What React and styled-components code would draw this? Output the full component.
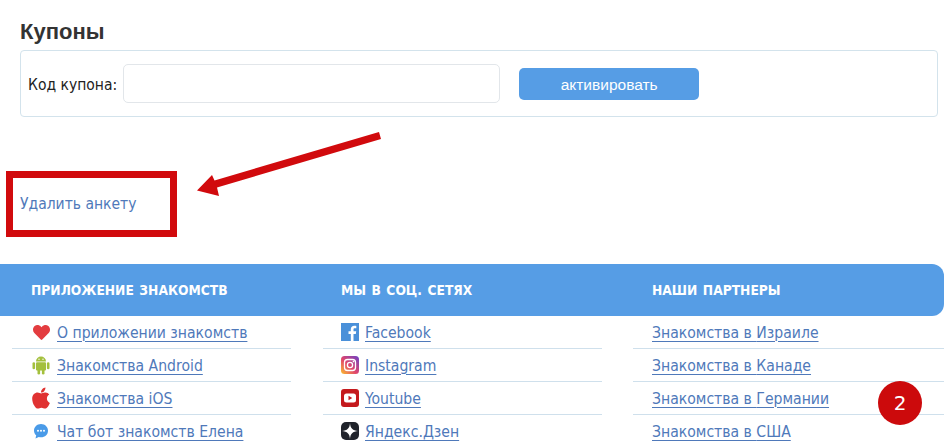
import React from 'react';
import styled, { createGlobalStyle } from 'styled-components';
import { FaApple, FaHeart } from 'react-icons/fa';

const GlobalStyle = createGlobalStyle`
  html, body {
    margin: 0;
    background: #fff;
  }
  body {
    font-family: 'DejaVu Sans', sans-serif;
  }
`;

const Page = styled.div`
  position: relative;
  width: 952px;
  height: 444px;
  overflow: hidden;
`;

const Coupons = styled.section`
  padding: 20px 14px 0 20px;
`;

const Heading = styled.h2`
  margin: 0 0 6px;
  font: bold 22px/24px 'Liberation Sans', sans-serif;
  color: #333;
`;

const CouponBox = styled.form`
  display: flex;
  align-items: center;
  height: 65px;
  padding: 0 7px;
  border: 1px solid #d3e3ec;
  border-radius: 4px;
`;

const Label = styled.label`
  margin: 2px 6px 0 0;
  font-size: 15.5px;
  color: #222;
  font-stretch: condensed;
`;

const CodeInput = styled.input`
  box-sizing: border-box;
  width: 377px;
  height: 39px;
  margin-right: 19px;
  border: 1px solid #e2e6ea;
  border-radius: 5px;
`;

const Activate = styled.button`
  width: 180px;
  height: 32px;
  padding: 2px 0 0;
  border: 0;
  border-radius: 5px;
  background: #569de5;
  color: #fff;
  font: 15.5px 'Liberation Sans', sans-serif;
`;

const DeleteRow = styled.div`
  margin: 77px 0 0 20px;
  height: 20px;
`;

const DeleteLink = styled.a`
  font-size: 15.5px;
  line-height: 20px;
  color: #4f79ba;
  font-stretch: condensed;
`;

const Frame = styled.div`
  position: absolute;
  left: 6px;
  top: 171px;
  width: 171px;
  height: 66px;
  box-sizing: border-box;
  border: 7px solid #d10a0d;
`;

const Arrow = styled.svg`
  position: absolute;
  left: 190px;
  top: 125px;
`;

const Columns = styled.div`
  display: grid;
  grid-template-columns: 311px 311px 322px;
  margin-top: 50px;
  width: 944px;
`;

const Title = styled.h3`
  margin: 0;
  height: 52px;
  padding-left: ${p => (p.$first ? '31px' : '30px')};
  background: #569de5;
  border-radius: ${p => (p.$last ? '0 12px 12px 0' : '0')};
  color: #fff;
  font-size: 13.7px;
  font-weight: bold;
  font-stretch: condensed;
  word-spacing: 1.2px;
  line-height: 52px;
`;

const List = styled.ul`
  list-style: none;
  margin: 0;
  padding: 0 ${p => (p.$last ? '0' : '20px')} 0 ${p => (p.$last ? '11px' : '12px')};
`;

const Item = styled.li`
  display: flex;
  align-items: center;
  height: 32px;
  padding-left: ${p => (p.$plain ? '19px' : '18px')};
  border-bottom: 1px solid #cfe0ec;
`;

const Glyph = styled.span`
  display: flex;
  justify-content: center;
  width: 18px;
  margin: 0 7px 0 2px;
  color: ${p => p.$color};
  font-size: ${p => p.$size || 18}px;
`;

const Square = styled.svg`
  display: block;
  width: 18px;
  height: 18px;
  margin-right: 6px;
`;

const Link = styled.a`
  font-size: 15.6px;
  line-height: 20px;
  padding-top: 1px;
  color: #4f79ba;
  text-decoration: underline;
  text-underline-offset: 3px;
  text-decoration-thickness: 1px;
  font-stretch: condensed;
`;

const Badge = styled.div`
  position: absolute;
  left: 878px;
  top: 381px;
  width: 44px;
  height: 44px;
  border-radius: 50%;
  background: #cc0a0c;
  color: #fff;
  font: 20px/44px 'DejaVu Sans', sans-serif;
  text-align: center;
`;

const AndroidIcon = () => (
  <svg width="18" height="20" viewBox="0 0 18 20">
    <g fill="#a4c03d">
      <path d="M4 6.500a5 5 0 0 1 10 0z" />
      <rect x="4" y="7.300" width="10" height="8.200" rx="1" />
      <rect x="0.500" y="7.300" width="2.600" height="7" rx="1.300" />
      <rect x="14.900" y="7.300" width="2.600" height="7" rx="1.300" />
      <rect x="5.500" y="14" width="2.600" height="5.500" rx="1.300" />
      <rect x="9.900" y="14" width="2.600" height="5.500" rx="1.300" />
    </g>
    <circle cx="7" cy="4.200" r=".7" fill="#fff" />
    <circle cx="11" cy="4.200" r=".7" fill="#fff" />
  </svg>
);

const ChatIcon = () => (
  <svg width="16" height="16" viewBox="0 0 16 16">
    <path fill="#4a9be8" d="M8 1c4 0 7 2.900 7 6.700s-3 6.600-7 6.600c-.8 0-1.500-.1-2.200-.3L2.500 15.500l.7-3.200C1.800 11.100 1 9.500 1 7.700 1 3.900 4 1 8 1z" />
    <circle cx="5" cy="7.700" r="1" fill="#fff" />
    <circle cx="8" cy="7.700" r="1" fill="#fff" />
    <circle cx="11" cy="7.700" r="1" fill="#fff" />
  </svg>
);

const FacebookIcon = () => (
  <Square viewBox="0 0 18 18">
    <rect width="18" height="18" fill="#4a90d9" />
    <path fill="#fff" d="M12.500 18v-7h2.300l.4-2.700h-2.700V6.600c0-.8.3-1.300 1.400-1.300h1.400V2.900c-.3 0-1.100-.1-2-.1-2.100 0-3.500 1.200-3.500 3.500v2H7.500V11h2.300v7z" />
  </Square>
);

const InstagramIcon = () => (
  <Square viewBox="0 0 18 18">
    <defs>
      <linearGradient id="ig" x1="0" y1="1" x2="1" y2="0">
        <stop offset="0" stopColor="#fbc02d" />
        <stop offset="0.45" stopColor="#e1456b" />
        <stop offset="1" stopColor="#6a42c8" />
      </linearGradient>
    </defs>
    <rect width="18" height="18" rx="3.500" fill="url(#ig)" />
    <rect x="3.500" y="3.500" width="11" height="11" rx="3" fill="none" stroke="#fff" strokeWidth="1.300" />
    <circle cx="9" cy="9" r="2.600" fill="none" stroke="#fff" strokeWidth="1.300" />
    <circle cx="12.400" cy="5.600" r=".8" fill="#fff" />
  </Square>
);

const YoutubeIcon = () => (
  <Square viewBox="0 0 18 18">
    <rect width="18" height="18" rx="3" fill="#c4191d" />
    <rect x="3" y="4.500" width="12" height="9" rx="2.500" fill="#fff" />
    <path fill="#c4191d" d="M7.500 6.800v4.400L11.300 9z" />
  </Square>
);

const ZenIcon = () => (
  <Square viewBox="0 0 18 18">
    <rect width="18" height="18" rx="5" fill="#20232b" />
    <path fill="#fff" d="M9 1c.3 5.200 2.800 7.700 8 8-5.200.3-7.700 2.800-8 8-.3-5.200-2.800-7.700-8-8 5.200-.3 7.700-2.800 8-8z" />
  </Square>
);

const appLinks = [
  { text: 'О приложении знакомств', icon: <Glyph $color="#e33c3f" $size={17}><FaHeart /></Glyph> },
  { text: 'Знакомства Android', icon: <Glyph><AndroidIcon /></Glyph> },
  { text: 'Знакомства iOS', icon: <Glyph $color="#e03232" $size={24}><FaApple /></Glyph> },
  { text: 'Чат бот знакомств Елена', icon: <Glyph><ChatIcon /></Glyph> },
];

const socialLinks = [
  { text: 'Facebook', icon: <FacebookIcon /> },
  { text: 'Instagram', icon: <InstagramIcon /> },
  { text: 'Youtube', icon: <YoutubeIcon /> },
  { text: 'Яндекс.Дзен', icon: <ZenIcon /> },
];

const partners = ['Израиле', 'Канаде', 'Германии', 'США'];

export default function App() {
  return (
    <Page>
      <GlobalStyle />
      <Coupons>
        <Heading>Купоны</Heading>
        <CouponBox>
          <Label>Код купона:</Label>
          <CodeInput type="text" />
          <Activate type="button">активировать</Activate>
        </CouponBox>
      </Coupons>

      <DeleteRow>
        <DeleteLink>Удалить анкету</DeleteLink>
      </DeleteRow>

      <Columns>
        <div>
          <Title $first>ПРИЛОЖЕНИЕ ЗНАКОМСТВ</Title>
          <List>
            {appLinks.map(l => (
              <Item key={l.text}>{l.icon}<Link>{l.text}</Link></Item>
            ))}
          </List>
        </div>
        <div>
          <Title>МЫ В СОЦ. СЕТЯХ</Title>
          <List>
            {socialLinks.map(l => (
              <Item key={l.text}>{l.icon}<Link>{l.text}</Link></Item>
            ))}
          </List>
        </div>
        <div>
          <Title $last>НАШИ ПАРТНЕРЫ</Title>
          <List $last>
            {partners.map(p => (
              <Item key={p} $plain><Link>Знакомства в {p}</Link></Item>
            ))}
          </List>
        </div>
      </Columns>

      <Frame />
      <Arrow width="195" height="80" viewBox="0 0 195 80">
        <path fill="#d10a0d" d="M189 7 L191 14 L27 62.500 L29 71 L7 65.500 L22 50 L24.500 55.500z" />
      </Arrow>
      <Badge>2</Badge>
    </Page>
  );
}
